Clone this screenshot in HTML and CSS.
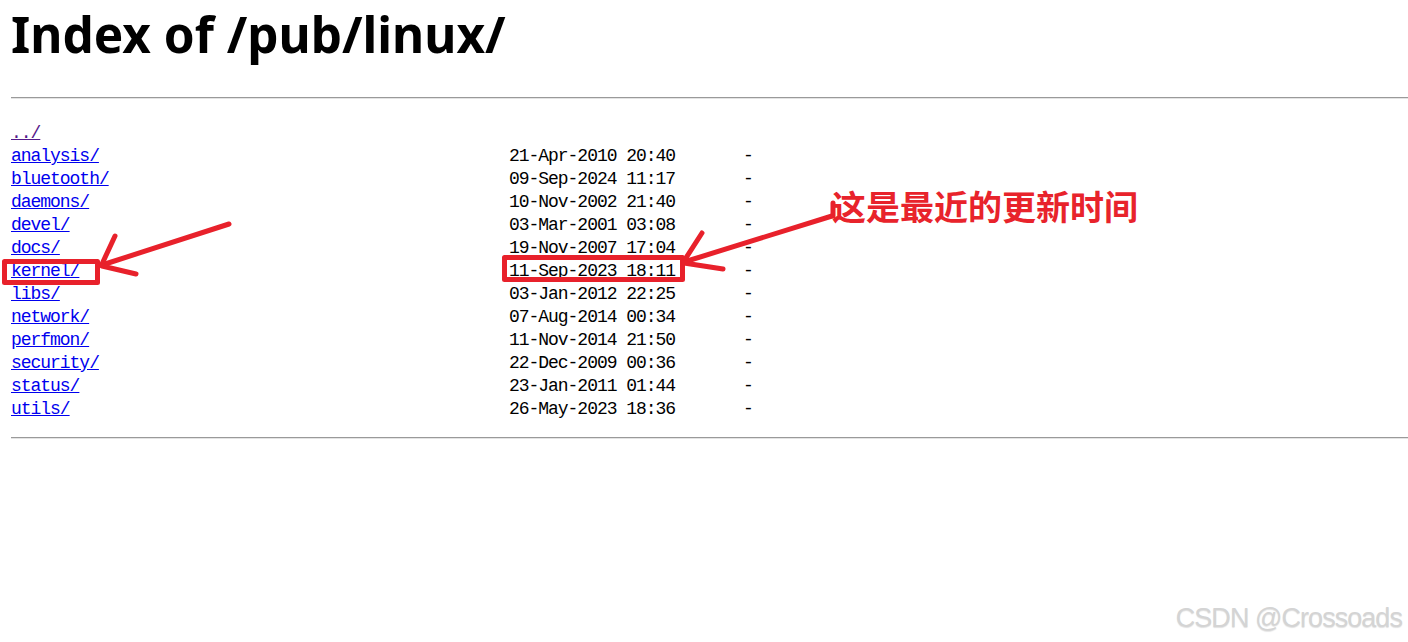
FILE: index.html
```html
<!DOCTYPE html>
<html>
<head>
<meta charset="utf-8">
<title>Index of /pub/linux/</title>
<link rel="stylesheet" href="styles.css">
</head>
<body>
<h1 class="title">Index of /pub/linux/</h1>
<hr class="rule rule-top">
<div class="listing">
  <div class="row"><a class="visited" href="../">../</a></div>
  <div class="row"><a href="analysis/">analysis/</a><span class="date">21-Apr-2010 20:40</span><span class="size">-</span></div>
  <div class="row"><a href="bluetooth/">bluetooth/</a><span class="date">09-Sep-2024 11:17</span><span class="size">-</span></div>
  <div class="row"><a href="daemons/">daemons/</a><span class="date">10-Nov-2002 21:40</span><span class="size">-</span></div>
  <div class="row"><a href="devel/">devel/</a><span class="date">03-Mar-2001 03:08</span><span class="size">-</span></div>
  <div class="row"><a href="docs/">docs/</a><span class="date">19-Nov-2007 17:04</span><span class="size">-</span></div>
  <div class="row"><a href="kernel/">kernel/</a><span class="date">11-Sep-2023 18:11</span><span class="size">-</span></div>
  <div class="row"><a href="libs/">libs/</a><span class="date">03-Jan-2012 22:25</span><span class="size">-</span></div>
  <div class="row"><a href="network/">network/</a><span class="date">07-Aug-2014 00:34</span><span class="size">-</span></div>
  <div class="row"><a href="perfmon/">perfmon/</a><span class="date">11-Nov-2014 21:50</span><span class="size">-</span></div>
  <div class="row"><a href="security/">security/</a><span class="date">22-Dec-2009 00:36</span><span class="size">-</span></div>
  <div class="row"><a href="status/">status/</a><span class="date">23-Jan-2011 01:44</span><span class="size">-</span></div>
  <div class="row"><a href="utils/">utils/</a><span class="date">26-May-2023 18:36</span><span class="size">-</span></div>
</div>
<hr class="rule rule-bottom">

<svg class="annot" width="1408" height="642" viewBox="0 0 1408 642" aria-hidden="true">
  <g fill="none" stroke="#e8212b" stroke-width="5" stroke-linecap="round" stroke-linejoin="round">
    <rect x="4.5" y="261.5" width="93" height="21"/>
    <rect x="504.5" y="257.5" width="178" height="22"/>
    <line x1="229" y1="224" x2="102" y2="265"/>
    <line x1="115" y1="236" x2="102" y2="264"/>
    <line x1="102" y1="266" x2="136" y2="274"/>
    <line x1="832" y1="216" x2="684" y2="262"/>
    <line x1="702" y1="233" x2="684" y2="261"/>
    <line x1="684" y1="263" x2="723" y2="269"/>
    <line x1="833" y1="203" x2="833" y2="216"/>
  </g>
</svg>
<div class="callout">这是最近的更新时间</div>
<div class="watermark">CSDN @Crossoads</div>
</body>
</html>
```
FILE: styles.css
```css
html, body {
  background: #ffffff;
}
body {
  margin: 0;
  padding: 4px 0 0 11px;
  color: #000;
  font-family: "Liberation Serif", serif;
}
.title {
  margin: 0;
  font-family: "Noto Sans", "Open Sans", sans-serif;
  font-weight: 700;
  font-size: 49.5px;
  line-height: 60px;
  color: #000;
}
.rule {
  height: 0;
  border: 0;
  border-top: 1px solid #9a9a9a;
  border-bottom: 1px solid #e4e4e4;
  margin: 0;
}
.rule-top {
  margin-top: 33px;
}
.rule-bottom {
  margin-top: 16px;
}
.listing {
  margin-top: 23px;
  font-family: "Liberation Mono", monospace;
  font-size: 18px;
  line-height: 23px;
  letter-spacing: -1.035px;
}
.row {
  display: grid;
  grid-template-columns: 498px 234px auto;
  height: 23px;
  white-space: pre;
}
.row a {
  justify-self: start;
  color: #0000ee;
  text-decoration: underline;
}
.row a.visited {
  color: #551a8b;
}
.date, .size {
  color: #000;
}
.annot {
  position: absolute;
  left: 0;
  top: 0;
  pointer-events: none;
}
.callout {
  position: absolute;
  left: 832px;
  top: 189px;
  font-family: "Noto Sans CJK SC", sans-serif;
  font-weight: 700;
  font-size: 34px;
  line-height: 34px;
  color: #e8232b;
  white-space: nowrap;
}
.watermark {
  position: absolute;
  right: 6px;
  top: 605px;
  font-family: "Liberation Sans", Arial, sans-serif;
  font-size: 27px;
  line-height: 27px;
  letter-spacing: -0.95px;
  color: #d4d4d4;
  text-shadow: 0 1px 1px rgba(0, 0, 0, 0.12);
  white-space: nowrap;
}
```
